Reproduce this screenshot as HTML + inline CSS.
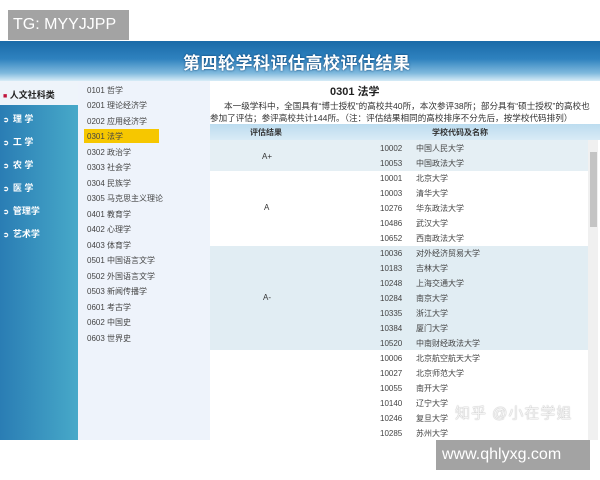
<!DOCTYPE html>
<html><head><meta charset="utf-8"><style>
*{margin:0;padding:0;box-sizing:border-box}
body{width:600px;height:480px;background:#fff;position:relative;overflow:hidden;font-family:"Liberation Sans","Noto Sans CJK SC",sans-serif;color:#333}
.abs{position:absolute}
#tg{left:8px;top:10px;width:121px;height:30px;background:#a3a3a3;color:#fff;font-size:16px;line-height:30px;padding-left:5px}
#hdr{left:0;top:41px;width:600px;height:40px;background:linear-gradient(180deg,#1a6aa8 0%,#2f82bf 45%,#7fb9dd 80%,#d8ecf7 100%)}
#hdr span{position:absolute;left:183px;top:8px;font-size:17px;font-weight:bold;color:#fff;letter-spacing:0.5px;text-shadow:0 0 2px #0a3d6e}
#left{left:0;top:81px;width:78px;height:359px;background:linear-gradient(90deg,#2a7db4,#47a9c9)}
.lm{position:absolute;left:3px;font-size:9px;font-weight:bold;color:#fff}
.lm.a:before{content:"➲";font-size:7px;margin-right:4px}
#lsel{left:0;top:81px;width:78px;height:24px;background:#eef4fa}
#menu{left:78px;top:81px;width:132px;height:359px;background:#eef3fb}
.mi{position:absolute;left:87px;font-size:8px;color:#444}
#hl{left:84px;top:129px;width:75px;height:14px;background:#f6c700}
#main{left:210px;top:81px;width:390px;height:359px;background:#fff}
.t{position:absolute;font-size:8px;color:#333;white-space:nowrap}
.row{position:absolute;left:210px;width:378px}
</style></head><body>
<div id="tg" class="abs">TG: MYYJJPP</div>
<div id="hdr" class="abs"><span>第四轮学科评估高校评估结果</span></div>
<div id="left" class="abs"></div>
<div id="lsel" class="abs"></div>
<div class="lm" style="top:88px;color:#222"><b style="color:#c0143c;font-size:7px">■</b> 人文社科类</div>
<div class="lm a" style="top:112px">理 学</div>
<div class="lm a" style="top:135px">工 学</div>
<div class="lm a" style="top:158px">农 学</div>
<div class="lm a" style="top:181px">医 学</div>
<div class="lm a" style="top:204px">管理学</div>
<div class="lm a" style="top:227px">艺术学</div>
<div id="menu" class="abs"></div>
<div id="hl" class="abs"></div>
<div class="mi" style="top:85px">0101 哲学</div>
<div class="mi" style="top:100px">0201 理论经济学</div>
<div class="mi" style="top:116px">0202 应用经济学</div>
<div class="mi" style="top:131px">0301 法学</div>
<div class="mi" style="top:147px">0302 政治学</div>
<div class="mi" style="top:162px">0303 社会学</div>
<div class="mi" style="top:178px">0304 民族学</div>
<div class="mi" style="top:193px">0305 马克思主义理论</div>
<div class="mi" style="top:209px">0401 教育学</div>
<div class="mi" style="top:224px">0402 心理学</div>
<div class="mi" style="top:240px">0403 体育学</div>
<div class="mi" style="top:255px">0501 中国语言文学</div>
<div class="mi" style="top:271px">0502 外国语言文学</div>
<div class="mi" style="top:286px">0503 新闻传播学</div>
<div class="mi" style="top:302px">0601 考古学</div>
<div class="mi" style="top:317px">0602 中国史</div>
<div class="mi" style="top:333px">0603 世界史</div>
<div id="main" class="abs"></div>
<div class="t" style="left:330px;top:83px;font-size:11px;font-weight:bold;color:#222">0301 法学</div>
<div class="t" style="left:224px;top:100px;font-size:8.6px">本一级学科中，全国具有“博士授权”的高校共40所，本次参评38所；部分具有“硕士授权”的高校也</div>
<div class="t" style="left:210px;top:112px;font-size:8.6px">参加了评估；参评高校共计144所。（注：评估结果相同的高校排序不分先后，按学校代码排列）</div>
<div class="row" style="top:124px;height:16px;background:linear-gradient(180deg,#bcdcef,#d9ebf6);width:390px"></div>
<div class="t" style="left:250px;top:127px;font-weight:bold">评估结果</div>
<div class="t" style="left:432px;top:127px;font-weight:bold">学校代码及名称</div>
<div class="row" style="top:140px;height:31px;background:#e5eff4"></div>
<div class="row" style="top:246px;height:104px;background:#e1edf3"></div>
<div class="t" style="left:262px;top:152px">A+</div>
<div class="t" style="left:264px;top:203px">A</div>
<div class="t" style="left:263px;top:293px">A-</div>
<div style="position:absolute;left:380px;top:141px;font-size:8px;line-height:15px;color:#444">10002<br>10053<br>10001<br>10003<br>10276<br>10486<br>10652<br>10036<br>10183<br>10248<br>10284<br>10335<br>10384<br>10520<br>10006<br>10027<br>10055<br>10140<br>10246<br>10285</div>
<div style="position:absolute;left:416px;top:141px;font-size:8px;line-height:15px;color:#444">中国人民大学<br>中国政法大学<br>北京大学<br>清华大学<br>华东政法大学<br>武汉大学<br>西南政法大学<br>对外经济贸易大学<br>吉林大学<br>上海交通大学<br>南京大学<br>浙江大学<br>厦门大学<br>中南财经政法大学<br>北京航空航天大学<br>北京师范大学<br>南开大学<br>辽宁大学<br>复旦大学<br>苏州大学</div>
<div class="abs" style="left:588px;top:140px;width:10px;height:300px;background:#f0f0f0"></div>
<div class="abs" style="left:590px;top:152px;width:7px;height:75px;background:#c4c4c4"></div>
<div class="t" style="left:455px;top:402px;font-size:15px;color:#f4f4f4;text-shadow:0 0 1px #888;letter-spacing:1px">知乎 @小在学姐</div>
<div class="abs" style="left:436px;top:440px;width:154px;height:30px;background:#a3a3a3;color:#fff;font-size:16px;line-height:30px;padding-left:6px">www.qhlyxg.com</div>
</body></html>
